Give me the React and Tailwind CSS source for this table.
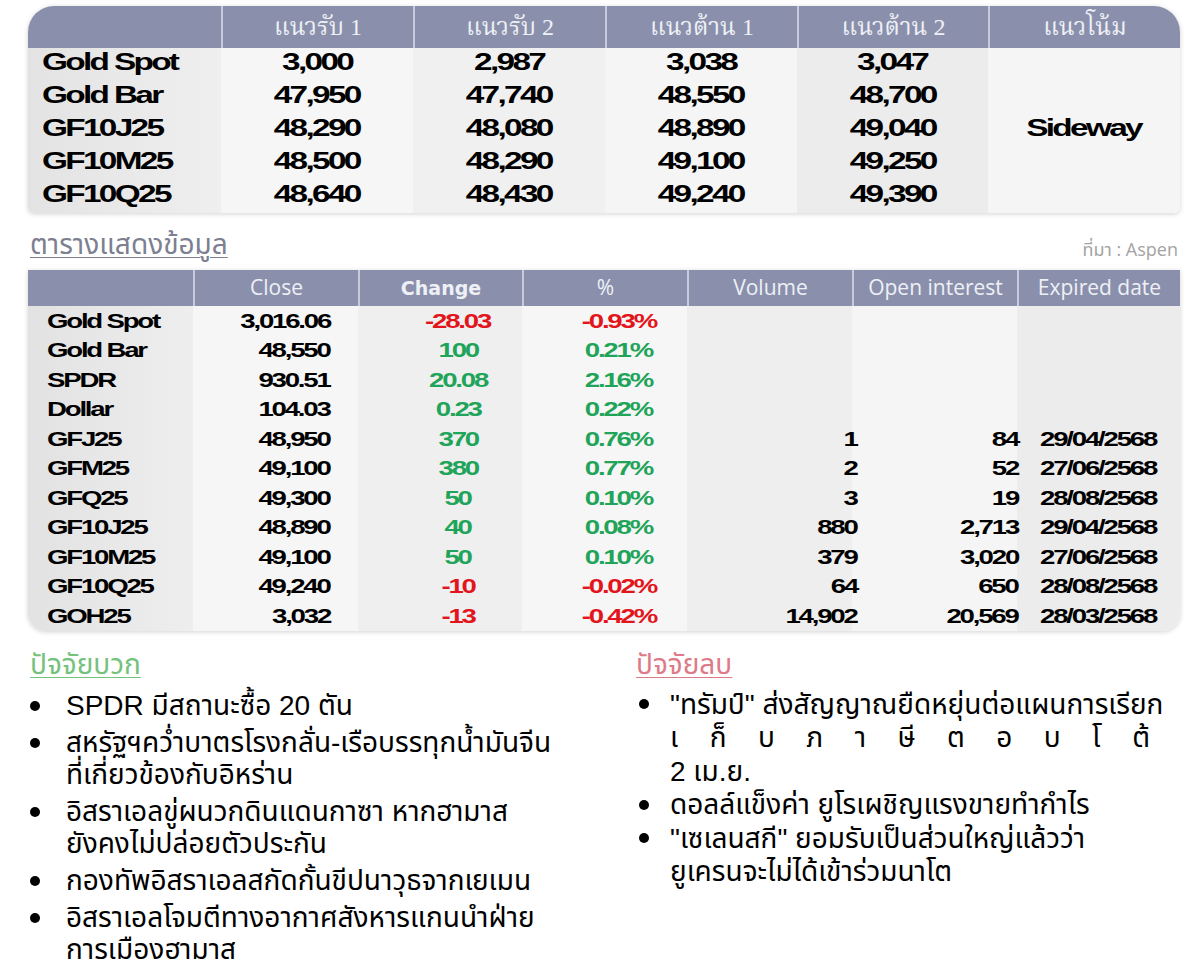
import React from "react";

const NUM = "font-['Liberation_Sans',Arial,sans-serif] font-bold text-black";
const TH = "font-['Liberation_Sans','Noto_Sans_Thai','Noto_Sans_Thai_UI','Loma','Garuda','Norasi',sans-serif]";
const THS = "font-['Liberation_Serif','Noto_Serif_Thai','Norasi','Noto_Sans_Thai','Loma',serif]";
const HD = "font-['Open_Sans','Noto_Sans_Thai','Loma',sans-serif]";

function Big({ children, o = "center" }) {
  const origin = o === "left" ? "origin-left" : o === "right" ? "origin-right" : "origin-center";
  return (
    <span className={`inline-block whitespace-nowrap text-[23px] leading-none tracking-[-0.08em] scale-x-[1.45] ${origin}`}>
      {children}
    </span>
  );
}

function Small({ children, o = "center", color = "" }) {
  const origin = o === "left" ? "origin-left" : o === "right" ? "origin-right" : "origin-center";
  return (
    <span className={`inline-block whitespace-nowrap text-[20px] leading-none tracking-[-0.08em] scale-x-[1.38] ${origin} ${color}`}>
      {children}
    </span>
  );
}

const topRows = [
  ["Gold Spot", "3,000", "2,987", "3,038", "3,047"],
  ["Gold Bar", "47,950", "47,740", "48,550", "48,700"],
  ["GF10J25", "48,290", "48,080", "48,890", "49,040"],
  ["GF10M25", "48,500", "48,290", "49,100", "49,250"],
  ["GF10Q25", "48,640", "48,430", "49,240", "49,390"],
];

const topHead = ["", "แนวรับ 1", "แนวรับ 2", "แนวต้าน 1", "แนวต้าน 2", "แนวโน้ม"];
const topBg = [
  "bg-gradient-to-r from-[#e3e3e3] to-[#efefef]",
  "bg-[#f6f6f6]",
  "bg-[#f0f0f0]",
  "bg-[#f5f5f5]",
  "bg-[#ececec]",
  "bg-[#f5f5f5]",
];

const rows = [
  ["Gold Spot", "3,016.06", "-28.03", "-0.93%", "", "", ""],
  ["Gold Bar", "48,550", "100", "0.21%", "", "", ""],
  ["SPDR", "930.51", "20.08", "2.16%", "", "", ""],
  ["Dollar", "104.03", "0.23", "0.22%", "", "", ""],
  ["GFJ25", "48,950", "370", "0.76%", "1", "84", "29/04/2568"],
  ["GFM25", "49,100", "380", "0.77%", "2", "52", "27/06/2568"],
  ["GFQ25", "49,300", "50", "0.10%", "3", "19", "28/08/2568"],
  ["GF10J25", "48,890", "40", "0.08%", "880", "2,713", "29/04/2568"],
  ["GF10M25", "49,100", "50", "0.10%", "379", "3,020", "27/06/2568"],
  ["GF10Q25", "49,240", "-10", "-0.02%", "64", "650", "28/08/2568"],
  ["GOH25", "3,032", "-13", "-0.42%", "14,902", "20,569", "28/03/2568"],
];

const botBg = [
  "bg-gradient-to-r from-[#e2e2e2] to-[#eeeeee]",
  "bg-[#f6f6f6]",
  "bg-[#efefef]",
  "bg-[#f6f6f6]",
  "bg-[#eeeeee]",
  "bg-[#f5f5f5]",
  "bg-[#ececec]",
];

function TopTable() {
  return (
    <div className="w-[1152px] rounded-t-[26px] rounded-b-[6px] overflow-hidden shadow-[0_1px_5px_rgba(0,0,0,0.18)]">
      <div className="grid grid-cols-[193px_192px_192px_192px_191px_192px] grid-rows-[42px_repeat(5,33px)]">
        {topHead.map((h, i) => (
          <div
            key={"h" + i}
            className={`bg-[#8a90ac] flex items-center justify-center text-[24px] text-[#eef0f6] ${THS} ${i > 0 ? "border-l-2 border-[#c6cadc]" : ""}`}
          >
            {h}
          </div>
        ))}
        <div className={`col-start-6 row-start-2 row-span-5 ${topBg[5]} flex items-center justify-center pb-[4px] ${NUM}`}>
          <Big>Sideway</Big>
        </div>
        {topRows.map((r, ri) =>
          r.map((c, ci) => (
            <div
              key={ri + "-" + ci}
              className={`${topBg[ci]} flex items-center pb-[5px] ${NUM} ${ci === 0 ? "justify-start pl-[14px]" : "justify-center"}`}
            >
              <Big o={ci === 0 ? "left" : "center"}>{c}</Big>
            </div>
          ))
        )}
      </div>
    </div>
  );
}

const botHead = ["", "Close", "Change", "%", "Volume", "Open interest", "Expired date"];

function colorOf(v) {
  if (!v) return "";
  return v.startsWith("-") ? "text-[#e3151c]" : "text-[#1fa45a]";
}

function BottomTable() {
  return (
    <div className="w-[1152px] rounded-b-[18px] overflow-hidden shadow-[0_1px_5px_rgba(0,0,0,0.18)]">
      <div className="grid grid-cols-[165px_165px_164px_165px_165px_165px_163px] grid-rows-[36px_repeat(11,29.5px)]">
        {botHead.map((h, i) => (
          <div
            key={"bh" + i}
            className={`bg-[#8a90ac] flex items-center justify-center text-[#eef0f6] ${
              i === 2
                ? "font-['DejaVu_Sans',sans-serif] font-bold text-[19px]"
                : `${HD} text-[21px]`
            } ${i > 0 ? "border-l-2 border-[#c6cadc]" : ""}`}
          >
            {h}
          </div>
        ))}
        {rows.map((r, ri) =>
          r.map((c, ci) => {
            let align = "";
            let o = "center";
            let color = "";
            if (ci === 0) {
              align = "justify-start pl-[19px]";
              o = "left";
            } else if (ci === 1) {
              align = "justify-end pr-[28px]";
              o = "right";
            } else if (ci === 2) {
              align = "justify-center pl-[36px]";
              color = colorOf(c);
            } else if (ci === 3) {
              align = "justify-center pl-[28px]";
              color = colorOf(c);
            } else if (ci === 4) {
              align = "justify-end -mr-[5px]";
              o = "right";
            } else if (ci === 5) {
              align = "justify-end -mr-[1px]";
              o = "right";
            } else {
              align = "justify-center";
            }
            return (
              <div key={ri + "_" + ci} className={`${botBg[ci]} flex items-center ${align} ${NUM}`}>
                {c ? (
                  <Small o={o} color={color}>
                    {c}
                  </Small>
                ) : null}
              </div>
            );
          })
        )}
      </div>
    </div>
  );
}

function Dot() {
  return <span className="block w-[10px] h-[10px] rounded-full bg-black shrink-0" />;
}

function Item({ children, left }) {
  return (
    <div className="flex items-start">
      <div className={`${left ? "w-[36px] h-[32px]" : "w-[34px] pl-[3px] h-[33.5px]"} flex items-center shrink-0`}>
        <Dot />
      </div>
      <div className="flex-1">{children}</div>
    </div>
  );
}

const spread = ["เ", "ก็", "บ", "ภ", "า", "ษี", "ต", "อ", "บ", "โ", "ต้"];

export default function App() {
  return (
    <div className="w-[1200px] h-[968px] bg-white overflow-hidden pt-[6px] px-[28px]">
      <TopTable />

      <div className="h-[57px] flex items-end justify-between pb-[10px]">
        <div className={`${TH} text-[28px] leading-[30px] text-[#7c8090] underline underline-offset-[3px] decoration-[1px] pl-[2px]`}>
          ตารางแสดงข้อมูล
        </div>
        <div className={`${HD} text-[18px] text-[#a3a3a3] -mb-[3px] -mr-[6px]`}>ที่มา : Aspen</div>
      </div>

      <BottomTable />

      <div className={`flex mt-[18px] ${TH} text-black text-[28px]`}>
        <div className="w-[605px] pl-[2px] leading-[32px]">
          <div className="text-[#74c27c] underline underline-offset-[3px] decoration-[1px] mb-[9px] leading-[32px]">
            ปัจจัยบวก
          </div>
          <div className="flex flex-col gap-[5px]">
            <Item left>SPDR มีสถานะซื้อ 20 ตัน</Item>
            <Item left>
              <div className="whitespace-nowrap">สหรัฐฯคว่ำบาตรโรงกลั่น-เรือบรรทุกน้ำมันจีน</div>
              <div className="whitespace-nowrap">ที่เกี่ยวข้องกับอิหร่าน</div>
            </Item>
            <Item left>
              <div className="whitespace-nowrap">อิสราเอลขู่ผนวกดินแดนกาซา หากฮามาส</div>
              <div className="whitespace-nowrap">ยังคงไม่ปล่อยตัวประกัน</div>
            </Item>
            <Item left>กองทัพอิสราเอลสกัดกั้นขีปนาวุธจากเยเมน</Item>
            <Item left>
              <div className="whitespace-nowrap">อิสราเอลโจมตีทางอากาศสังหารแกนนำฝ่าย</div>
              <div className="whitespace-nowrap">การเมืองฮามาส</div>
            </Item>
          </div>
        </div>
        <div className="w-[517px] pl-[3px] leading-[33.5px]">
          <div className="text-[#de7b88] underline underline-offset-[3px] decoration-[1px] mb-[7px] leading-[32px]">
            ปัจจัยลบ
          </div>
          <div className="flex flex-col">
            <Item>
              <div className="w-[480px]">
                <div className="whitespace-nowrap">"ทรัมป์" ส่งสัญญาณยืดหยุ่นต่อแผนการเรียก</div>
                <div className="flex justify-between">
                  {spread.map((s, i) => (
                    <span key={i}>{s}</span>
                  ))}
                </div>
                <div>2 เม.ย.</div>
              </div>
            </Item>
            <Item>ดอลล์แข็งค่า ยูโรเผชิญแรงขายทำกำไร</Item>
            <Item>
              <div className="w-[480px]">
                <div className="whitespace-nowrap">"เซเลนสกี" ยอมรับเป็นส่วนใหญ่แล้วว่า</div>
                <div className="whitespace-nowrap">ยูเครนจะไม่ได้เข้าร่วมนาโต</div>
              </div>
            </Item>
          </div>
        </div>
      </div>
    </div>
  );
}
